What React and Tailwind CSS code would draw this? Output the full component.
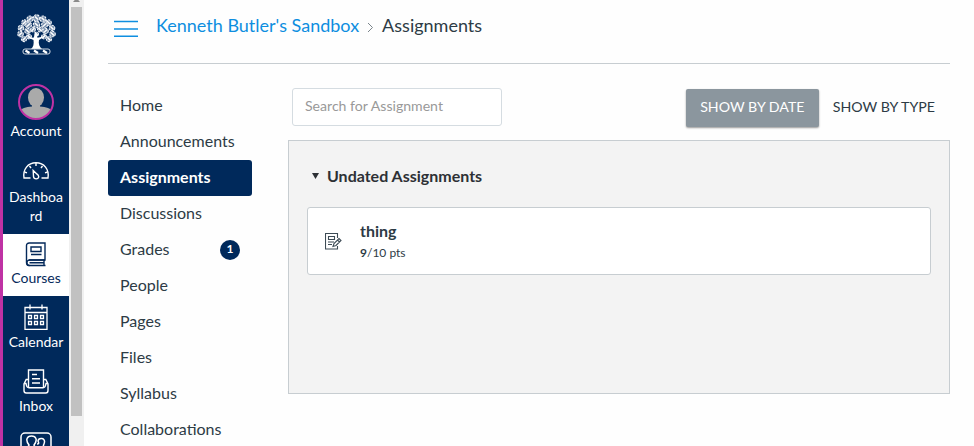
import React from "react";

const leaves = [
  [20, 4, 3.2], [13.500, 5, 3], [26.500, 5, 3], [8, 8.500, 2.800], [32, 8.500, 2.800], [4.500, 14, 2.800], [35.500, 14, 2.800],
  [4, 20, 2.800], [36, 20, 2.800], [7.500, 25, 2.600], [32.500, 25, 2.600], [12, 11, 3], [20, 10.500, 3.200],
  [28, 11, 3], [11, 17, 2.800], [16.500, 15.500, 2.400], [23.500, 15.500, 2.400], [29, 17, 2.800], [12.500, 22.500, 2.400], [27.500, 22.500, 2.400], [20, 20, 2],
];

function TreeLogo() {
  return (
    <svg width="41" height="41" viewBox="0 0 40 41" fill="none">
      {leaves.map(([x, y, r], i) => (
        <g key={i}>
          <circle cx={x} cy={y} r={r} fill="#7d93af" stroke="#f4f6f9" strokeWidth="1.100" strokeDasharray="2.200 0.900" />
          <path d={i % 2 ? `M${x - 1.5} ${y + 1.5}l3-3` : `M${x - 1.5} ${y - 1.5}l3 3`} stroke="#fff" strokeWidth="1.500" />
        </g>
      ))}
      <path d="M14.500 35c2.500-2 3-5 2.500-9l-7-3 7 .8 2.500-5.800 1.500 5.800 8-1.800-6.500 4c-.8 4 .5 7 3 9z" fill="#fff" />
      <rect x="6.500" y="35" width="27" height="5" rx="2" stroke="#cfd8e3" />
      <path d="M9 36.500l4 2.500M17.500 36.500l4 2.500M26.500 36.500l4 2.500" stroke="#fff" strokeWidth="2.200" />
    </svg>
  );
}

function Avatar() {
  return (
    <svg width="36" height="36" viewBox="0 0 36 36">
      <defs><clipPath id="face"><circle cx="18" cy="18" r="17" /></clipPath></defs>
      <g clipPath="url(#face)" fill="#aaa">
        <ellipse cx="18" cy="13.500" rx="8" ry="9.500" />
        <path d="M14 20h8v2.500c6 .5 11 1.500 13 5.500v8H1v-8c2-4 7-5 13-5.500z" />
      </g>
      <circle cx="18" cy="18" r="17" fill="none" stroke="#bf32a4" strokeWidth="2" />
    </svg>
  );
}

function DashboardIcon() {
  return (
    <svg width="28" height="20" viewBox="0 0 28 20" fill="none" stroke="#fff" strokeWidth="1.400">
      <path d="M8.500 17H2C.6 8.200 6 1.800 14 1.800S27.400 8.200 26 17h-6.500" />
      <path d="M14 2v3M7.500 5l1.500 2M20.500 5L19 7M2.500 11l2.500.8M25.500 11l-2.500.8" />
      <path d="M11.200 9.500l.3 6c.2 3.200 5.400 3.200 5.200 0-.1-1.300-.9-1.900-1.900-2.600z" />
    </svg>
  );
}

function CoursesIcon() {
  return (
    <svg width="22" height="26" viewBox="0 0 22 26" fill="none" stroke="#04295a" strokeWidth="1.400">
      <path d="M4 19h16V2H4.200C2.500 2 1.500 3 1.500 4.500v17c0 2 1 3 2.500 3h16.500" />
      <path d="M20 19H4.500c-3.500 0-3.500 5.500 0 5.500M19 19v5.500M4.500 21.800H19" />
      <path d="M6 6h10v4.500H6zM6 13.500h10.500" />
    </svg>
  );
}

function CalendarIcon() {
  return (
    <svg width="24" height="26" viewBox="0 0 24 26" fill="none" stroke="#fff" strokeWidth="1.300">
      <path d="M1 3.500h22v21.800H1zM1 8.500h22M6 .5v5M18 .5v5" />
      <path d="M4.500 11.500h3v3h-3zM10.500 11.500h3v3h-3zM16.500 11.500h3v3h-3zM4.500 17.500h3v3h-3zM10.500 17.500h3v3h-3zM16.500 17.500h3v3h-3z" />
    </svg>
  );
}

function InboxIcon() {
  return (
    <svg width="26" height="25" viewBox="0 0 26 25" fill="none" stroke="#fff" strokeWidth="1.400">
      <path d="M5.500 18V1h15v17M5.500 10.500H3.200L1 15v6.500C1 23 1.800 24 3.300 24h19.400c1.500 0 2.300-1 2.300-2.500V15l-2.200-4.500h-2.300" />
      <path d="M1 14.500h2c.5 3.300 1.300 4.300 3 4.300h14c1.700 0 2.500-1 3-4.300h2M9 5.500h5M9 9.800h8M9 14h8" />
    </svg>
  );
}

function GroupsIcon() {
  return (
    <svg width="32" height="26" viewBox="0 0 32 26" fill="none" stroke="#fff" strokeWidth="1.500">
      <rect x="1" y="1" width="30" height="24" rx="4" />
      <path d="M5 18c1-4 4-3 4-5-4-5-2-9 2.500-9S18 8 14 13c0 2 3 2 4 5" />
      <path d="M17 12c2 0 2-1 1-3 .5-3.500 7-3.500 6.500 1-.4 3-1.500 3-1 4 .5 1.200 3 1 3.500 4" />
    </svg>
  );
}

function NavItem({ icon, label, className }) {
  return (
    <div className={"flex shrink-0 flex-col items-center text-center text-[14px] leading-[19px] " + className}>
      {icon}
      <span className="w-[56px]">{label}</span>
    </div>
  );
}

function GlobalNav() {
  return (
    <nav className="flex h-full w-[69px] shrink-0 flex-col overflow-hidden border-l-3 border-[#bf32a4] bg-[#00295b] text-white">
      <div className="flex h-[75px] shrink-0 justify-center pt-[14px]"><TreeLogo /></div>
      <NavItem className="h-[77px] gap-[1px] pt-[9px]" icon={<Avatar />} label="Account" />
      <NavItem
        className="h-[82px] gap-[6px] pt-[9px]"
        icon={<DashboardIcon />}
        label={<>Dashboa<br />rd</>}
      />
      <NavItem className="h-[62px] gap-[1px] bg-white pt-[7px] text-[#04295a]" icon={<CoursesIcon />} label="Courses" />
      <NavItem className="h-[64px] gap-[2px] pt-[8px]" icon={<CalendarIcon />} label="Calendar" />
      <NavItem className="h-[64px] gap-[2px] pt-[9px]" icon={<InboxIcon />} label="Inbox" />
      <NavItem className="h-[64px] pt-[8px]" icon={<GroupsIcon />} label="" />
    </nav>
  );
}

function Scrollbar() {
  return (
    <div className="flex h-full w-[15px] shrink-0 flex-col bg-[#f0f0f0] pl-[2px]">
      <svg width="11" height="7" viewBox="0 0 11 7"><path d="M2 2l3.500-4L9 2z" fill="#8a8a8a" /></svg>
      <div className="h-[409px] w-[11px] bg-[#c1c1c1]" />
    </div>
  );
}

const links = ["Home", "Announcements", "Assignments", "Discussions", "Grades", "People", "Pages", "Files", "Syllabus", "Collaborations"];

function CourseMenu() {
  return (
    <ul className="w-[144px] shrink-0 text-[16px] leading-[20px] text-[#2d3b45]">
      {links.map((name) => (
        <li
          key={name}
          className={
            "flex h-9 items-center justify-between px-3 " +
            (name === "Assignments" ? "rounded-[3px] bg-[#00295b] font-bold text-white" : "")
          }
        >
          <span className="pb-[2px]">{name}</span>
          {name === "Grades" && (
            <span className="flex size-5 items-center justify-center rounded-full bg-[#00295b] pb-[2px] text-[12px] font-bold leading-none text-white">1</span>
          )}
        </li>
      ))}
    </ul>
  );
}

function AssignmentIcon() {
  return (
    <svg width="17" height="17" viewBox="0 0 17 17" fill="none" stroke="#3d4b55" strokeWidth="1.100">
      <path d="M12.500 5V.5h-12v15.500h12v-3M3.500 3.500h6v3h-6zM3 9h6M3 11.500h4" />
      <path d="M8 13.500l1-3 5-5 2 2-5 5zM12.500 7l2 2" />
    </svg>
  );
}

function Header() {
  return (
    <header className="flex h-[64px] w-[842px] border-b border-[#c7cdd1] pl-[6px] text-[18px] leading-[24px]">
      <svg className="mt-[20px]" width="24" height="18" viewBox="0 0 24 18" stroke="#0e8ee0" strokeWidth="1.500">
        <path d="M0 1.500h24M0 9h24M0 16.200h24" />
      </svg>
      <span className="ml-[18px] mt-[13px] text-[#0e8ee0]">Kenneth Butler's Sandbox</span>
      <svg className="ml-[8px] mt-[22px]" width="7" height="11" viewBox="0 0 7 11" fill="none" stroke="#7b858c">
        <path d="M1 1l4.500 4.500L1 10" />
      </svg>
      <span className="ml-[8px] mt-[13px] text-[#2d3b45]">Assignments</span>
    </header>
  );
}

export default function App() {
  return (
    <div className="flex h-[446px] w-[974px] overflow-hidden bg-[#fefefe] font-['Lato',sans-serif]">
      <GlobalNav />
      <Scrollbar />
      <div className="pl-6">
        <Header />
        <div className="flex pt-[24px]">
          <CourseMenu />
          <main className="ml-9 w-[662px]">
            <div className="flex h-[52px] items-start justify-between pl-1 pr-[15px]">
              <input
                className="h-[38px] w-[210px] rounded-[3px] border border-[#d5dce1] bg-white px-3 pb-[4px] text-[14.1px] placeholder:text-[#999]"
                placeholder="Search for Assignment"
              />
              <div className="flex items-center pt-px text-[14.2px] text-[#2d3b45]">
                <button className="h-[38px] w-[133px] rounded-[2px] bg-[#8b969e] pb-[3px] text-white shadow-[0_1px_2px_rgba(0,0,0,0.4)]">SHOW BY DATE</button>
                <button className="ml-[14px] pb-[3px]">SHOW BY TYPE</button>
              </div>
            </div>
            <section className="h-[254px] border border-[#c7cdd1] bg-[#f3f3f3] px-[18px] pt-[25px]">
              <h2 className="flex h-[20px] items-center text-[16px] font-bold text-[#2d3035]">
                <svg className="mb-px ml-[4.5px] mr-[8.5px]" width="7" height="6" viewBox="0 0 7 6"><path d="M0 0h7L3.500 6z" fill="#2d3035" /></svg>
                Undated Assignments
              </h2>
              <article className="mt-[21px] flex h-[68px] items-center rounded-[3px] border border-[#c7cdd1] bg-white pl-[17px]">
                <AssignmentIcon />
                <div className="ml-[18px] text-[#2d3b45]">
                  <div className="text-[16px] font-bold leading-[22px]">thing</div>
                  <div className="text-[12px] leading-[20px]"><div className="pt-px leading-[19px]"><b>9</b>/10 pts</div></div>
                </div>
              </article>
            </section>
          </main>
        </div>
      </div>
    </div>
  );
}
